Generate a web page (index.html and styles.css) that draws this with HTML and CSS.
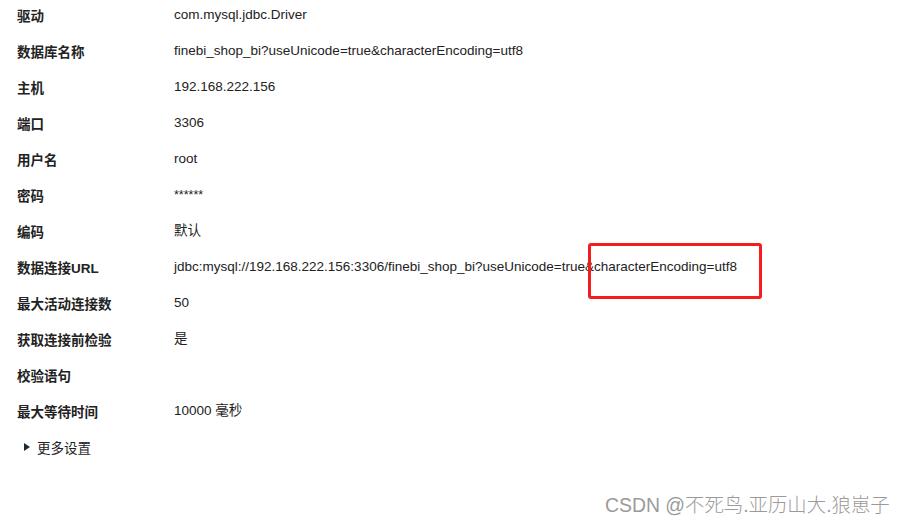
FILE: index.html
```html
<!DOCTYPE html>
<html lang="zh">
<head>
<meta charset="utf-8">
<link rel="stylesheet" href="styles.css">
</head>
<body>
<div class="page">
  <div class="form">
    <div class="row"><div class="label">驱动</div><div class="value">com.mysql.jdbc.Driver</div></div>
    <div class="row"><div class="label">数据库名称</div><div class="value">finebi_shop_bi?useUnicode=true&amp;characterEncoding=utf8</div></div>
    <div class="row"><div class="label">主机</div><div class="value">192.168.222.156</div></div>
    <div class="row"><div class="label">端口</div><div class="value">3306</div></div>
    <div class="row"><div class="label">用户名</div><div class="value">root</div></div>
    <div class="row"><div class="label">密码</div><div class="value pw">******</div></div>
    <div class="row"><div class="label">编码</div><div class="value">默认</div></div>
    <div class="row"><div class="label">数据连接URL</div><div class="value">jdbc:mysql://192.168.222.156:3306/finebi_shop_bi?useUnicode=true&amp;characterEncoding=utf8</div></div>
    <div class="row"><div class="label">最大活动连接数</div><div class="value">50</div></div>
    <div class="row"><div class="label">获取连接前检验</div><div class="value">是</div></div>
    <div class="row"><div class="label">校验语句</div><div class="value"></div></div>
    <div class="row"><div class="label">最大等待时间</div><div class="value">10000 毫秒</div></div>
    <div class="more"><span class="tri"></span><span>更多设置</span></div>
  </div>
  <div class="highlight"></div>
  <div class="watermark">CSDN @不死鸟.亚历山大.狼崽子</div>
</div>
</body>
</html>
```
FILE: styles.css
```css
html, body {
  margin: 0;
  padding: 0;
  background: #ffffff;
}
.page {
  position: relative;
  width: 902px;
  height: 524px;
  overflow: hidden;
  font-family: "Liberation Sans", "Noto Sans CJK SC", sans-serif;
  font-size: 13.5px;
  color: #222;
}
.form {
  padding: 5px 0 0 17px;
}
.row {
  display: flex;
  align-items: flex-start;
  height: 36px;
}
.label {
  width: 157px;
  flex: none;
  padding-top: 2px;
  line-height: 20px;
  font-weight: bold;
  color: #222;
}
.value {
  line-height: 20px;
  white-space: nowrap;
  color: #222;
}
.value.pw {
  font-size: 12.5px;
}
.more {
  display: flex;
  align-items: center;
  height: 20px;
  padding-left: 7px;
  color: #222;
}
.tri {
  width: 0;
  height: 0;
  border-top: 4px solid transparent;
  border-bottom: 4px solid transparent;
  border-left: 6px solid #1a2a3a;
  margin-right: 7px;
}
.highlight {
  position: absolute;
  left: 588px;
  top: 243px;
  width: 168px;
  height: 50px;
  border: 3px solid #f41c1c;
  border-radius: 3px;
}
.watermark {
  position: absolute;
  left: 605px;
  top: 493px;
  font-size: 19.4px;
  line-height: 24px;
  font-weight: 300;
  color: #9a9a9a;
  white-space: nowrap;
}
```
